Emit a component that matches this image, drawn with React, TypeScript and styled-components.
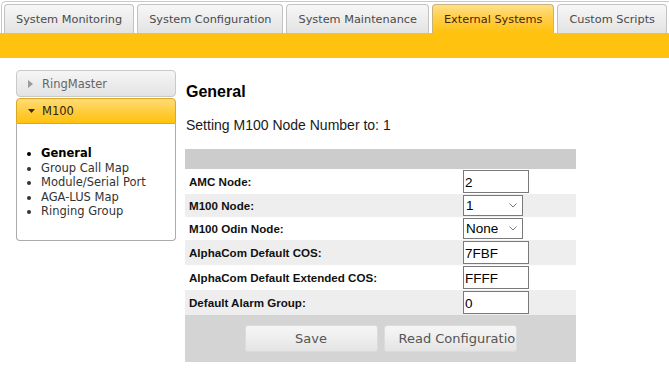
import styled, { createGlobalStyle } from 'styled-components';

const GlobalStyle = createGlobalStyle`
  html, body {
    margin: 0;
    padding: 0;
    background: #fff;
  }
  body {
    font-family: 'DejaVu Sans', Verdana, sans-serif;
  }
`;

const tabs = ['System Monitoring', 'System Configuration', 'System Maintenance', 'External Systems', 'Custom Scripts'];
const activeTab = 'External Systems';

const menuItems = ['General', 'Group Call Map', 'Module/Serial Port', 'AGA-LUS Map', 'Ringing Group'];
const activeItem = 'General';

interface Field {
  label: string;
  kind: 'text' | 'select';
  value: string;
  options?: string[];
}

const fields: Field[] = [
  { label: 'AMC Node:', kind: 'text', value: '2' },
  { label: 'M100 Node:', kind: 'select', value: '1', options: ['1', '2', '3', '4'] },
  { label: 'M100 Odin Node:', kind: 'select', value: 'None', options: ['None', '1', '2', '3'] },
  { label: 'AlphaCom Default COS:', kind: 'text', value: '7FBF' },
  { label: 'AlphaCom Default Extended COS:', kind: 'text', value: 'FFFF' },
  { label: 'Default Alarm Group:', kind: 'text', value: '0' },
];

const App = () => {
  return (
    <>
      <GlobalStyle />
      <TabBar>
        {tabs.map((t) => (
          <Tab key={t} $active={t === activeTab}>
            {t}
          </Tab>
        ))}
      </TabBar>
      <Band />
      <Content>
        <Sidebar>
          <AccordionHeader>
            <svg width="5" height="8" viewBox="0 0 5 8">
              <path d="M0 0 L5 4 L0 8 Z" fill="#9a9a9a" />
            </svg>
            <span>RingMaster</span>
          </AccordionHeader>
          <AccordionHeader $open>
            <svg width="7" height="4" viewBox="0 0 7 4">
              <path d="M0 0 L7 0 L3.5 4 Z" fill="#3a2a10" />
            </svg>
            <span>M100</span>
          </AccordionHeader>
          <Panel>
            <MenuList>
              {menuItems.map((m) => (
                <MenuItem key={m} $active={m === activeItem}>
                  {m}
                </MenuItem>
              ))}
            </MenuList>
          </Panel>
        </Sidebar>
        <Main>
          <Title>General</Title>
          <Notice>Setting M100 Node Number to: 1</Notice>
          <FormTable>
            <colgroup>
              <col style={{ width: 276 }} />
              <col />
            </colgroup>
            <tbody>
              <tr>
                <HeaderCell colSpan={2} />
              </tr>
              {fields.map((f, i) => (
                <Row key={f.label} $shaded={i % 2 === 1}>
                  <LabelCell>{f.label}</LabelCell>
                  <ValueCell>
                    {f.kind === 'text' ? (
                      <TextInput type="text" defaultValue={f.value} />
                    ) : (
                      <SelectWrap>
                        <Select defaultValue={f.value}>
                          {f.options?.map((o) => (
                            <option key={o}>{o}</option>
                          ))}
                        </Select>
                        <Chevron width="8" height="5" viewBox="0 0 8 5">
                          <path d="M0.5 0.5 L4 4 L7.5 0.5" fill="none" stroke="#7a7a7a" strokeWidth="1" />
                        </Chevron>
                      </SelectWrap>
                    )}
                  </ValueCell>
                </Row>
              ))}
              <tr>
                <ActionCell colSpan={2}>
                  <Actions>
                    <ActionButton>Save</ActionButton>
                    <ActionButton>Read Configuration</ActionButton>
                  </Actions>
                </ActionCell>
              </tr>
            </tbody>
          </FormTable>
        </Main>
      </Content>
    </>
  );
};

export default App;

const TabBar = styled.div`
  display: flex;
  align-items: flex-end;
  gap: 3px;
  margin: 1px 0 0 1px;
  padding: 3px 0 0 2px;
  height: 28px;
  border-top: 1px solid #c9c9c9;
  border-left: 1px solid #c9c9c9;
  border-radius: 5px 0 0 0;
  background: #fff;
  overflow: hidden;
`;

const Tab = styled.div<{ $active?: boolean }>`
  flex-shrink: 0;
  height: 27px;
  padding: 1px 11px 0;
  line-height: 27px;
  border: 1px solid ${({ $active }) => ($active ? '#c8b27c' : '#c2c2c2')};
  border-bottom: none;
  border-radius: 4px 4px 0 0;
  font-size: 11.3px;
  white-space: nowrap;
  color: ${({ $active }) => ($active ? '#4a1e08' : '#4a4a4a')};
  background: ${({ $active }) =>
    $active
      ? 'linear-gradient(to bottom, #ffe089 0%, #ffcf4a 45%, #ffc20e 100%)'
      : 'linear-gradient(to bottom, #f7f7f7 0%, #ececec 55%, #e3e3e3 100%)'};
`;

const Band = styled.div`
  height: 25px;
  background: #ffc20e;
`;

const Content = styled.div`
  display: flex;
  align-items: flex-start;
  padding: 12px 0 0 16px;
`;

const Sidebar = styled.div`
  width: 160px;
  display: flex;
  flex-direction: column;
`;

const AccordionHeader = styled.div<{ $open?: boolean }>`
  display: flex;
  align-items: center;
  gap: ${({ $open }) => ($open ? '7px' : '9px')};
  height: ${({ $open }) => ($open ? '24px' : '25px')};
  margin-top: ${({ $open }) => ($open ? '1px' : '0')};
  padding-left: 11px;
  border: 1px solid ${({ $open }) => ($open ? '#d9a824' : '#c9c9c9')};
  border-radius: ${({ $open }) => ($open ? '4px 4px 0 0' : '4px')};
  font-size: 11.5px;
  color: ${({ $open }) => ($open ? '#2e2410' : '#666')};
  background: ${({ $open }) =>
    $open
      ? 'linear-gradient(to bottom, #ffdc78 0%, #ffcd3f 50%, #ffc20e 100%)'
      : 'linear-gradient(to bottom, #f6f6f6 0%, #ececec 50%, #e3e3e3 100%)'};
`;

const Panel = styled.div`
  padding: 22px 0 21px 24px;
  border: 1px solid #ababab;
  border-top: none;
  border-radius: 0 0 4px 4px;
  background: #fff;
`;

const MenuList = styled.ul`
  margin: 0;
  padding: 0;
  list-style: disc;
`;

const MenuItem = styled.li<{ $active?: boolean }>`
  font-size: 11.5px;
  line-height: 14.5px;
  color: ${({ $active }) => ($active ? '#000' : '#333')};
  font-weight: ${({ $active }) => ($active ? 'bold' : 'normal')};
`;

const Main = styled.div`
  margin-left: 9px;
  padding-top: 13px;
  width: 391px;
  font-family: 'Liberation Sans', Arial, sans-serif;
`;

const Title = styled.h2`
  margin: 0 0 0 1px;
  font-size: 16px;
  line-height: 18px;
  font-weight: bold;
  color: #000;
`;

const Notice = styled.p`
  margin: 16px 0 0 1px;
  font-size: 14px;
  line-height: 16px;
  color: #1a1a1a;
`;

const FormTable = styled.table`
  margin-top: 16px;
  width: 391px;
  border-collapse: collapse;
  border-spacing: 0;
  table-layout: fixed;
`;

const HeaderCell = styled.td`
  height: 20px;
  padding: 0;
  background: #cccccc;
`;

const Row = styled.tr<{ $shaded?: boolean }>`
  background: ${({ $shaded }) => ($shaded ? '#eeeeee' : '#ffffff')};
`;

const LabelCell = styled.td`
  padding: 0 4px;
  font-size: 11.6px;
  font-weight: bold;
  color: #111;
  white-space: nowrap;
  vertical-align: middle;
`;

const ValueCell = styled.td`
  padding: 1px 2px;
  vertical-align: middle;
  line-height: 0;
`;

const TextInput = styled.input`
  box-sizing: border-box;
  width: 66px;
  height: 23px;
  margin: 0;
  padding: 1px 1px 0;
  border: 1px solid #7a7a7a;
  border-radius: 0;
  font-family: 'Liberation Sans', Arial, sans-serif;
  font-size: 13.5px;
  color: #000;
  background: #fff;
  outline: none;
`;

const SelectWrap = styled.span`
  position: relative;
  display: inline-block;
  line-height: 0;
`;

const Select = styled.select`
  box-sizing: border-box;
  appearance: none;
  width: 60px;
  height: 21px;
  margin: 0;
  padding: 0 0 0 2px;
  border: 1px solid #7a7a7a;
  border-radius: 0;
  font-family: 'Liberation Sans', Arial, sans-serif;
  font-size: 13.5px;
  color: #000;
  background: #fff;
  outline: none;
`;

const Chevron = styled.svg`
  position: absolute;
  right: 6px;
  top: 8px;
  pointer-events: none;
`;

const ActionCell = styled.td`
  padding: 10px 0;
  background: #d4d4d4;
`;

const Actions = styled.div`
  display: flex;
  justify-content: center;
  gap: 6px;
`;

const ActionButton = styled.button`
  box-sizing: border-box;
  width: 133px;
  height: 27px;
  padding: 0 14px;
  overflow: hidden;
  white-space: nowrap;
  border: 1px solid #dcdcdc;
  border-radius: 3px;
  font-family: 'DejaVu Sans', Verdana, sans-serif;
  font-size: 13px;
  color: #555;
  background: linear-gradient(to bottom, #f6f6f6 0%, #eeeeee 50%, #e4e4e4 100%);
  cursor: pointer;
`;
